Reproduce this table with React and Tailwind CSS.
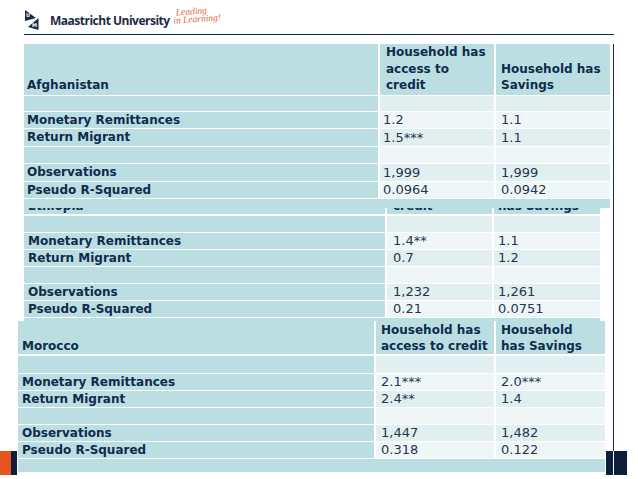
import React from "react";

const TEAL = "bg-[#badee2]";

const afghanistan = [
  ["", "", ""],
  ["Monetary Remittances", "1.2", "1.1"],
  ["Return Migrant", "1.5***", "1.1"],
  ["", "", ""],
  ["Observations", "1,999", "1,999"],
  ["Pseudo R-Squared", "0.0964", "0.0942"],
];

const ethiopia = [
  ["", "", ""],
  ["Monetary Remittances", "1.4**", "1.1"],
  ["Return Migrant", "0.7", "1.2"],
  ["", "", ""],
  ["Observations", "1,232", "1,261"],
  ["Pseudo R-Squared", "0.21", "0.0751"],
];

const morocco = [
  ["", "", ""],
  ["Monetary Remittances", "2.1***", "2.0***"],
  ["Return Migrant", "2.4**", "1.4"],
  ["", "", ""],
  ["Observations", "1,447", "1,482"],
  ["Pseudo R-Squared", "0.318", "0.122"],
];

const StatTable = ({ wrap, grid, headH, lead, head, rows, firstH, rowH, lastH, pads }) => {
  return (
    <div className={`bg-white ${wrap}`}>
      <div className={`grid ${grid} gap-x-[2px] ${headH}`}>
        {head.map((h, i) => (
          <div
            key={i}
            className={`flex items-end ${TEAL} text-[12px] font-bold text-[#102b4c] ${lead} ${pads.head[i]}`}
          >
            <div>
              {h.map((line, j) => (
                <div key={j} className="whitespace-nowrap">
                  {line}
                </div>
              ))}
            </div>
          </div>
        ))}
      </div>
      <div className={`mt-[2px] grid ${grid} gap-x-[2px] gap-y-[1px]`}>
        {rows.map((r, i) => {
          const shade = i % 2 === 0 ? "bg-[#e2eff1]" : "bg-[#eff6f8]";
          const h = i === 0 ? firstH : rowH;
          return (
            <React.Fragment key={i}>
              <div
                className={`flex items-center ${h} ${TEAL} text-[12px] font-bold text-[#102b4c] whitespace-nowrap ${pads.cell[0]}`}
              >
                {r[0]}
              </div>
              <div className={`flex items-center ${h} ${shade} text-[13px] text-[#24364f] ${pads.cell[1]}`}>
                {r[1]}
              </div>
              <div className={`flex items-center ${h} ${shade} text-[13px] text-[#24364f] ${pads.cell[2]}`}>
                {r[2]}
              </div>
            </React.Fragment>
          );
        })}
        <div className={`col-span-3 ${TEAL} ${lastH}`} />
      </div>
    </div>
  );
};

const Logo = () => (
  <svg width="14" height="20" viewBox="0 0 14 20">
    <polygon points="0,0 0,11 11,8" fill="#1c2a48" />
    <polygon points="13.5,8 13.5,20 3,17" fill="#1c2a48" />
    <text x="1" y="7" fontSize="5" fontWeight="bold" fill="#fff" fontFamily="DejaVu Sans, sans-serif">
      U
    </text>
    <text x="7" y="17" fontSize="5" fontWeight="bold" fill="#fff" fontFamily="DejaVu Sans, sans-serif">
      M
    </text>
  </svg>
);

export default function App() {
  return (
    <div className="relative w-[638px] h-[479px] overflow-hidden bg-white font-['DejaVu_Sans',sans-serif]">
      {/* slide header */}
      <header className="ml-[24px] w-[590px] h-[35px] border-b border-[#1c2a48] flex items-start pl-[1px] pt-[10px]">
        <Logo />
        <span className="ml-[11px] mt-[4px] font-['Open_Sans',sans-serif] text-[12px] font-bold tracking-[-0.5px] leading-[14px] text-[#1c2a48]">
          Maastricht University
        </span>
        <div className="ml-[3px] -mt-[3px] -rotate-[4deg] font-['Liberation_Serif',serif] italic text-[9.5px] leading-[8px] text-[#d8693a]">
          <div className="pl-[3px]">Leading</div>
          <div>in Learning!</div>
        </div>
      </header>

      {/* framed content */}
      <div className="ml-[24px] w-[590px] h-[407px] border-r border-[#1c2a48]">
        <StatTable
          wrap="relative z-20 mt-[9px] w-[586px]"
          grid="grid-cols-[354px_114px_114px]"
          headH="h-[50px]"
          lead="leading-[16.5px] pb-[1px]"
          head={[["Afghanistan"], ["Household has", "access to", "credit"], ["Household has", "Savings"]]}
          rows={afghanistan}
          firstH="h-[14.5px]"
          rowH="h-[16.5px]"
          lastH="h-[9px]"
          pads={{ head: ["pl-[3px]", "pl-[6px]", "pl-[5px]"], cell: ["pl-[3px]", "pl-[3px]", "pl-[5px]"] }}
        />
        <StatTable
          wrap="relative z-10 -mt-[46px] w-[576px]"
          grid="grid-cols-[361px_105px_106px]"
          headH="h-[52px]"
          lead="leading-[16.5px]"
          head={[["Ethiopia"], ["Household has", "access to", "credit"], ["Household", "has Savings"]]}
          rows={ethiopia}
          firstH="h-[16px]"
          rowH="h-[16px]"
          lastH="h-[12px]"
          pads={{ head: ["pl-[4px]", "pl-[6px]", "pl-[4px]"], cell: ["pl-[4px]", "pl-[6px]", "pl-[4px]"] }}
        />
        <StatTable
          wrap="relative z-30 -mt-[9px] -ml-[6px] w-[587px]"
          grid="grid-cols-[356px_118px_109px]"
          headH="h-[33px]"
          lead="leading-[16px]"
          head={[["Morocco"], ["Household has", "access to credit"], ["Household", "has Savings"]]}
          rows={morocco}
          firstH="h-[17px]"
          rowH="h-[16px]"
          lastH="h-[13px]"
          pads={{ head: ["pl-[4px]", "pl-[5px]", "pl-[5px]"], cell: ["pl-[4px]", "pl-[5px]", "pl-[5px]"] }}
        />
      </div>

      {/* slide footer marks */}
      <div className="flex h-[24px] justify-between pr-[11px]">
        <div className="flex">
          <div className="w-[11px] bg-[#e4551f]" />
          <div className="w-[6px] bg-[#0e1f3c]" />
        </div>
        <div className="flex gap-[1.5px]">
          <div className="w-[6.5px] bg-[#0e1f3c]" />
          <div className="w-[13px] bg-[#0e1f3c]" />
        </div>
      </div>
    </div>
  );
}
